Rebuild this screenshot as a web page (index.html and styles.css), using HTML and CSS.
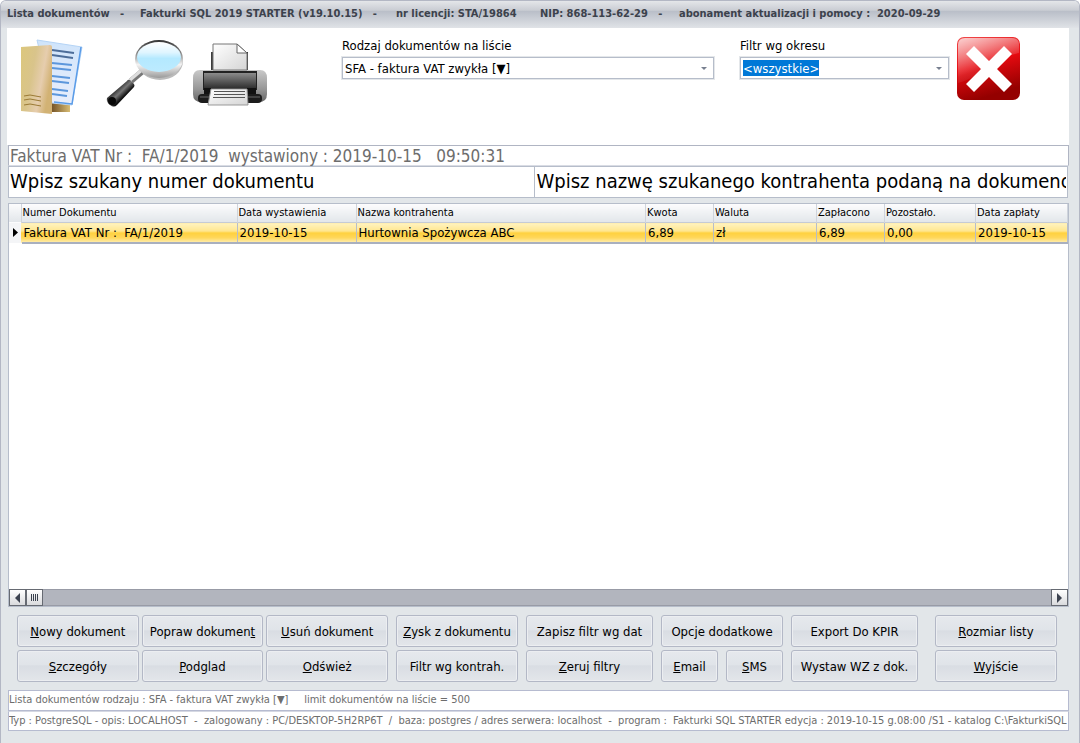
FILE: index.html
```
<!DOCTYPE html>
<html lang="pl">
<head>
    <meta charset="UTF-8">
    <meta name="viewport" content="width=device-width, initial-scale=1.0">
    <title>Lista dokumentów</title>
    <link rel="stylesheet" href="styles.css">
</head>
<body>
    <div class="window">
        <header class="titlebar">
            <span>Lista dokumentów   -</span>
            <span>Fakturki SQL 2019 STARTER (v19.10.15)   -</span>
            <span>nr licencji: STA/19864</span>
            <span>NIP: 868-113-62-29   -</span>
            <span>abonament aktualizacji i pomocy :  2020-09-29</span>
        </header>

        <div class="toolbar">
            <div class="tools">
                <button class="icon-button" type="button" aria-label="Dokumenty">
                    <svg width="64" height="76" viewBox="0 0 64 76">
                        <defs>
                            <linearGradient id="cover" x1="0" y1="0" x2="1" y2="0.4">
                                <stop offset="0" stop-color="#dcc77c"/>
                                <stop offset=".45" stop-color="#d9c48b"/>
                                <stop offset=".75" stop-color="#e6cdae"/>
                                <stop offset="1" stop-color="#d2b274"/>
                            </linearGradient>
                            <linearGradient id="back" x1="0" y1="0" x2="1" y2="0">
                                <stop offset="0" stop-color="#6b4a20"/>
                                <stop offset="1" stop-color="#d8bc74"/>
                            </linearGradient>
                            <linearGradient id="sheet" x1="0" y1="0" x2="0" y2="1">
                                <stop offset="0" stop-color="#cfe4fb"/>
                                <stop offset="1" stop-color="#e9eefb"/>
                            </linearGradient>
                        </defs>
                        <path d="M30 60h20v13H30z" fill="url(#back)"/>
                        <path d="M17 1l45 7-10 58-20-2z" fill="url(#sheet)" stroke="#b5d4f6"/>
                        <path d="M61 8l-9 57-18-2" fill="none" stroke="#5a9ce8" stroke-width="1.500"/>
                        <path d="M32 11l22 3M32 16l21 3" stroke="#4d6d99" stroke-width="2"/>
                        <path d="M32 24l20 2M32 29l19 2M32 37l18 2M32 42l17 2M32 50l16 2M32 55l15 2" stroke="#5c97dc" stroke-width="2"/>
                        <path d="M1 8l29-2q2 0 2 2v67L1 72z" fill="url(#cover)"/>
                        <path d="M4 57l6-1 11 2M4 61l6-1 11 2M4 66l6-1 11 2" fill="none" stroke="#9b7a35"/>
                    </svg>
                </button>
                <button class="icon-button" type="button" aria-label="Szukaj">
                    <svg width="78" height="70" viewBox="0 0 78 70">
                        <defs>
                            <linearGradient id="rim" x1="0" y1="0" x2="0" y2="1">
                                <stop offset="0" stop-color="#333"/>
                                <stop offset=".35" stop-color="#888"/>
                                <stop offset=".65" stop-color="#f4f4f4"/>
                                <stop offset="1" stop-color="#999"/>
                            </linearGradient>
                            <linearGradient id="glass" x1="0" y1="0" x2="0" y2="1">
                                <stop offset="0" stop-color="#fff"/>
                                <stop offset=".35" stop-color="#dff5ff"/>
                                <stop offset=".55" stop-color="#b4e9ff"/>
                                <stop offset="1" stop-color="#bdebff"/>
                            </linearGradient>
                            <linearGradient id="grip" x1="0" y1="0" x2="1" y2="1">
                                <stop offset=".3" stop-color="#1a1a1a"/>
                                <stop offset=".48" stop-color="#777"/>
                                <stop offset=".62" stop-color="#111"/>
                            </linearGradient>
                        </defs>
                        <path d="M25 42l13-11" stroke="#777" stroke-width="6"/>
                        <path d="M24 41l13-11" stroke="#ddd" stroke-width="3"/>
                        <ellipse cx="54" cy="22" rx="23" ry="19" fill="#bbb"/>
                        <ellipse cx="53" cy="20" rx="24" ry="19" fill="url(#rim)"/>
                        <ellipse cx="53" cy="18" rx="22" ry="15" fill="url(#glass)"/>
                        <path d="M21 42q1-2 3-1l4 4q1 2 0 3L11 66q-3 3-7 0t-3-7z" fill="url(#grip)"/>
                        <circle cx="6" cy="62" r="4" fill="#080808"/>
                    </svg>
                </button>
                <button class="icon-button" type="button" aria-label="Drukuj">
                    <svg width="76" height="64" viewBox="0 0 76 64">
                        <defs>
                            <linearGradient id="body" x1="0" y1="0" x2="0" y2="1">
                                <stop offset="0" stop-color="#c9c9c9"/>
                                <stop offset=".6" stop-color="#969696"/>
                                <stop offset="1" stop-color="#666"/>
                            </linearGradient>
                            <linearGradient id="panel" x1="0" y1="0" x2="0" y2="1">
                                <stop offset="0" stop-color="#8c8c8c"/>
                                <stop offset="1" stop-color="#303030"/>
                            </linearGradient>
                            <linearGradient id="paper" x1="0" y1="0" x2="1" y2="1">
                                <stop offset="0" stop-color="#fff"/>
                                <stop offset="1" stop-color="#d5d5d5"/>
                            </linearGradient>
                        </defs>
                        <path d="M19 9h37v20H19z" fill="#3d3d3d"/>
                        <path d="M8 27h60q7 0 7 8v16q0 8-8 8H9q-8 0-8-8V35q0-8 7-8z" fill="url(#body)"/>
                        <path d="M11 28h54v19H11z" fill="#222"/>
                        <path d="M12 30h52v15H12z" fill="url(#panel)"/>
                        <path d="M12 45h52v8H12z" fill="#111"/>
                        <rect x="6" y="51" width="64" height="9" rx="4" fill="#1c1c1c"/>
                        <path d="M8 54h60" stroke="#666"/>
                        <path d="M21 27V1h24l10 9v17z" fill="url(#paper)" stroke="#777"/>
                        <path d="M45 1v9h10z" fill="#fff" stroke="#666"/>
                        <path d="M19 46h36l1 16H16z" fill="url(#paper)" stroke="#999"/>
                        <path d="M22 48.500h31M22 51.500h31M21 54.500h32" stroke="#555"/>
                    </svg>
                </button>
            </div>
            <div class="field field-type">
                <label for="doc-type">Rodzaj dokumentów na liście</label>
                <select id="doc-type">
                    <option>SFA - faktura VAT zwykła [▼]</option>
                </select>
            </div>
            <div class="field field-period">
                <label for="period">Filtr wg okresu</label>
                <select id="period" class="active">
                    <option>&lt;wszystkie&gt;</option>
                </select>
            </div>
            <button class="icon-button close" type="button" aria-label="Zamknij">
                <svg width="63" height="63" viewBox="0 0 63 63">
                    <defs>
                        <linearGradient id="red" x1="0" y1="0" x2=".3" y2="1">
                            <stop offset="0" stop-color="#f04a4a"/>
                            <stop offset=".5" stop-color="#e60a10"/>
                            <stop offset="1" stop-color="#940000"/>
                        </linearGradient>
                        <linearGradient id="shine" x1="0" y1="0" x2=".5" y2="1">
                            <stop offset="0" stop-color="#fff" stop-opacity=".75"/>
                            <stop offset=".7" stop-color="#fff" stop-opacity=".1"/>
                            <stop offset="1" stop-color="#fff" stop-opacity="0"/>
                        </linearGradient>
                    </defs>
                    <rect width="63" height="63" rx="7" fill="url(#red)"/>
                    <path d="M1 8q0-7 7-7h47q7 0 7 7v8Q48 18 32 30T1 46z" fill="url(#shine)"/>
                    <path d="M17 9l15 15L47 9l8 8-15 15 15 15-8 8-15-15-15 15-8-8 15-15L9 17z" fill="#fff"/>
                </svg>
            </button>
        </div>

        <main class="content">
            <div class="current">Faktura VAT Nr :  FA/1/2019  wystawiony : 2019-10-15   09:50:31</div>
            <div class="search">
                <input type="text" value="Wpisz szukany numer dokumentu" aria-label="Numer dokumentu">
                <input type="text" value="Wpisz nazwę szukanego kontrahenta podaną na dokumencie" aria-label="Nazwa kontrahenta">
            </div>

            <div class="grid">
                <table>
                    <colgroup>
                        <col class="col-mark">
                        <col class="col-number">
                        <col class="col-issued">
                        <col>
                        <col class="col-amount">
                        <col class="col-currency">
                        <col class="col-amount">
                        <col class="col-left">
                        <col class="col-paid">
                    </colgroup>
                    <thead>
                        <tr>
                            <th></th>
                            <th>Numer Dokumentu</th>
                            <th>Data wystawienia</th>
                            <th>Nazwa kontrahenta</th>
                            <th>Kwota</th>
                            <th>Waluta</th>
                            <th>Zapłacono</th>
                            <th>Pozostało.</th>
                            <th>Data zapłaty</th>
                        </tr>
                    </thead>
                    <tbody>
                        <tr>
                            <td class="mark"><svg width="5" height="9" viewBox="0 0 5 9"><path d="M0 0l5 4.500-5 4.500z"/></svg></td>
                            <td>Faktura VAT Nr :  FA/1/2019</td>
                            <td>2019-10-15</td>
                            <td>Hurtownia Spożywcza ABC</td>
                            <td>6,89</td>
                            <td>zł</td>
                            <td>6,89</td>
                            <td>0,00</td>
                            <td>2019-10-15</td>
                        </tr>
                    </tbody>
                </table>
                <div class="scrollbar">
                    <button type="button" aria-label="Przewiń w lewo"><svg width="5" height="10" viewBox="0 0 5 10"><path d="M5 0L0 5l5 5z"/></svg></button>
                    <button type="button" aria-label="Suwak"><svg width="7" height="7" viewBox="0 0 7 7"><path d="M0 0h1v7H0zM2 0h1v7H2zM4 0h1v7H4zM6 0h1v7H6z"/></svg></button>
                    <button class="scroll-right" type="button" aria-label="Przewiń w prawo"><svg width="5" height="10" viewBox="0 0 5 10"><path d="M0 0l5 5-5 5z"/></svg></button>
                </div>
            </div>

            <div class="actions">
                <div class="group group-main">
                    <button type="button"><u>N</u>owy dokument</button>
                    <button type="button">Popraw dokumen<u>t</u></button>
                    <button type="button"><u>U</u>suń dokument</button>
                    <button type="button"><u>S</u>zczegóły</button>
                    <button type="button"><u>P</u>odglad</button>
                    <button type="button"><u>O</u>dśwież</button>
                </div>
                <div class="group group-narrow">
                    <button type="button"><u>Z</u>ysk z dokumentu</button>
                    <button type="button">Filtr wg kontrah.</button>
                </div>
                <div class="group group-wide">
                    <button type="button">Zapisz filtr wg dat</button>
                    <button type="button"><u>Z</u>eruj filtry</button>
                </div>
                <div class="group group-narrow group-split">
                    <button class="full" type="button">Opcje dodatkowe</button>
                    <button type="button"><u>E</u>mail</button>
                    <button type="button"><u>S</u>MS</button>
                </div>
                <div class="group group-wide">
                    <button type="button">Export Do KPIR</button>
                    <button type="button">Wystaw WZ z dok.</button>
                </div>
                <div class="group group-narrow group-last">
                    <button type="button"><u>R</u>ozmiar listy</button>
                    <button type="button"><u>W</u>yjście</button>
                </div>
            </div>

            <footer class="status">
                <div>Lista dokumentów rodzaju : SFA - faktura VAT zwykła [▼]     limit dokumentów na liście = 500</div>
                <div>Typ : PostgreSQL - opis: LOCALHOST  -  zalogowany : PC/DESKTOP-5H2RP6T  /  baza: postgres / adres serwera: localhost  -  program :  Fakturki SQL STARTER edycja : 2019-10-15 g.08:00 /S1 - katalog C:\FakturkiSQL</div>
            </footer>
        </main>
    </div>
</body>
</html>
```
FILE: styles.css
```
* {
    box-sizing: border-box;
}
body {
    margin: 0;
    background: #fff;
    font-family: Tahoma, "DejaVu Sans Condensed", "DejaVu Sans", sans-serif;
    font-size: 13px;
    color: #000;
}
button, select, input {
    font: inherit;
    color: inherit;
}
.window {
    min-height: 100vh;
    display: flex;
    flex-direction: column;
    background: #e2e6e9;
    border: 1px solid #b3b7c4;
    border-bottom: none;
    border-radius: 6px 6px 0 0;
}
.titlebar {
    display: grid;
    grid-template-columns: 133px 256px 144px 139px 1fr;
    height: 27px;
    padding: 0 6px;
    border-radius: 5px 5px 0 0;
    background: linear-gradient(#e4e6e9, #c9ccd3 35%, #b8bdc7 36%, #e0e3e7);
    color: #3c424c;
    font-size: 11px;
    font-weight: bold;
    line-height: 26px;
    white-space: pre;
}

/* Toolbar */
.toolbar {
    display: flex;
    align-items: flex-start;
    height: 117px;
    margin: 0 10px 0 6px;
    padding: 9px 49px 0 13px;
    background: #fff;
}
.tools {
    display: flex;
    align-items: flex-start;
    gap: 22px;
    margin-right: 74px;
    padding-top: 2px;
}
.tools .icon-button + .icon-button + .icon-button {
    margin-left: -14px;
    padding-top: 4px;
}
.icon-button {
    padding: 0;
    border: none;
    background: none;
}
.icon-button svg {
    display: block;
}
.field {
    min-width: 0;
    margin-right: 26px;
}
.field-type {
    flex: 372 1 0;
}
.field-period {
    flex: 209 1 0;
    margin-right: 8px;
}
.field label {
    display: block;
    line-height: 18px;
    margin-bottom: 2px;
}
.field select {
    display: block;
    width: 100%;
    height: 22px;
    padding: 0 2px;
    appearance: none;
    border: 1px solid #b6bdca;
    border-radius: 0;
    outline: 1px solid #e4e7ea;
    background: url("data:image/svg+xml,%3Csvg xmlns='http://www.w3.org/2000/svg' width='6' height='3'%3E%3Cpath d='M0 0h6L3 3z' fill='%23788090'/%3E%3C/svg%3E") no-repeat right 6px center;
}
.field select.active {
    color: #fff;
    background-image: url("data:image/svg+xml,%3Csvg xmlns='http://www.w3.org/2000/svg' width='6' height='3'%3E%3Cpath d='M0 0h6L3 3z' fill='%23788090'/%3E%3C/svg%3E"), linear-gradient(#0078d7, #0078d7);
    background-position: right 6px center, 2px 2px;
    background-size: auto, 76px 16px;
}

/* Search */
.content {
    flex: 1;
    display: flex;
    flex-direction: column;
    margin: 0 10px 0 7px;
}
.current {
    height: 21px;
    padding-left: 1px;
    border: 1px solid #b0b5c3;
    border-bottom-color: #d9dce4;
    background: #fff;
    color: #6d6d6d;
    font-size: 17px;
    line-height: 20px;
    white-space: pre;
}
.search {
    display: grid;
    grid-template-columns: 527fr 532fr;
    height: 32px;
    margin-right: 1px;
}
.search input {
    min-width: 0;
    padding: 0 1px 3px;
    border: 1px solid #b6bdca;
    border-radius: 0;
    background: #fff;
    font-size: 20px;
}
.search input + input {
    border-left: none;
}

/* Document list */
.grid {
    flex: 1;
    display: flex;
    flex-direction: column;
    margin-top: 5px;
    border: 1px solid #b6bdca;
    background: #fff;
}
table {
    width: 100%;
    table-layout: fixed;
    border-collapse: collapse;
}
.col-mark {
    width: 12px;
}
.col-number {
    width: 216px;
}
.col-issued {
    width: 119px;
}
.col-amount {
    width: 68px;
}
.col-currency {
    width: 103px;
}
.col-left {
    width: 91px;
}
.col-paid {
    width: 92px;
}
th {
    height: 18px;
    padding: 0 1px;
    border-right: 1px solid #cfd4dc;
    background: linear-gradient(#fcfcfd, #e2e6ea);
    font-size: 11px;
    font-weight: normal;
    line-height: 18px;
    text-align: left;
    white-space: pre;
}
td {
    height: 20px;
    padding: 0 2px;
    border-top: 1px solid #c5cbd5;
    border-right: 1px solid #b6bdca;
    border-bottom: 2px solid #a9b0bf;
    background: linear-gradient(#fff3c0, #ffe68f 40%, #ffd13f 50%, #ffd75a 75%, #ffeeb0);
    line-height: 17px;
    white-space: pre;
}
td.mark {
    padding: 0 0 0 4px;
    border-color: transparent;
    background: #f4f5f7;
}
.scrollbar {
    display: flex;
    height: 17px;
    margin-top: auto;
    border-top: 1px solid #989ba6;
    border-bottom: 1px solid #989ba6;
    background: #b2b5be;
}
.scrollbar button {
    display: flex;
    align-items: center;
    justify-content: center;
    width: 17px;
    height: 17px;
    margin-top: -1px;
    padding: 0;
    border: 1px solid #666a72;
    background: linear-gradient(#fff, #d9dadd);
    fill: #3c4350;
}
.scrollbar .scroll-right {
    margin-left: auto;
}

/* Action buttons */
.actions {
    display: flex;
    gap: 8px;
    padding: 8px 12px 8px 9px;
}
.group {
    display: grid;
    gap: 3px;
    min-width: 0;
}
.group-main {
    flex: 371 1 0;
    grid-template-columns: repeat(3, 1fr);
}
.group-narrow {
    flex: 122 1 0;
}
.group-wide {
    flex: 127 1 0;
}
.group-split {
    grid-template-columns: 1fr 1fr;
    column-gap: 8px;
}
.group-split .full {
    grid-column: span 2;
}
.group-last {
    margin-left: 9px;
}
.group button {
    height: 32px;
    padding: 0;
    border: 1px solid #b3b8c6;
    border-radius: 3px;
    background: linear-gradient(#e6e9ed, #e0e4e9 45%, #d9dde3 50%, #e3e6ea);
    box-shadow: inset 0 0 0 1px #eceef1;
    white-space: nowrap;
}

/* Status bar */
.status {
    margin-bottom: 12px;
    color: #6d6d6d;
    font-size: 11px;
    line-height: 17px;
}
.status div {
    height: 21px;
    border: 1px solid #b6bbd0;
    background: #fff;
    overflow: hidden;
    white-space: pre;
}
.status div + div {
    height: 20px;
    border-top-color: #d5d8e2;
}
```
